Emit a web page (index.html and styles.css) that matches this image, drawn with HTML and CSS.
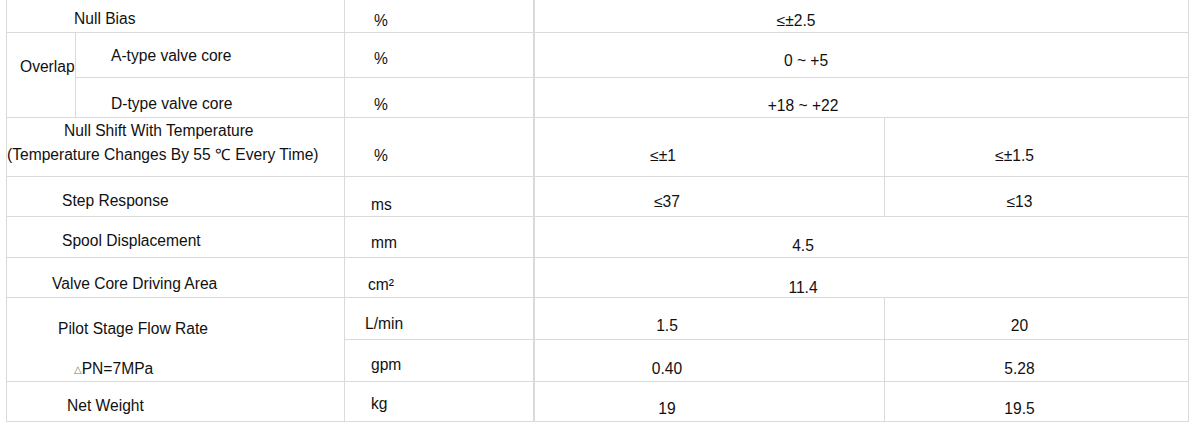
FILE: index.html
```html
<!DOCTYPE html>
<html lang="en">
<head>
<meta charset="utf-8">
<title>Valve specifications</title>
<link rel="stylesheet" href="styles.css">
</head>
<body>
<div class="spec">
  <!-- Row 1 -->
  <div class="cell lab pt10 pl67">Null Bias</div>
  <div class="cell unit pt12 pl29">%</div>
  <div class="cell val span-de pt12 pr131">≤±2.5</div>

  <!-- Row 2 -->
  <div class="cell sub-a rows2 pt25 pl13">Overlap</div>
  <div class="cell sub-b pt14 pl35">A-type valve core</div>
  <div class="cell unit pt17 pl29">%</div>
  <div class="cell val span-de pt19 pr111">0 ~ +5</div>

  <!-- Row 3 -->
  <div class="cell sub-b pt17 pl35">D-type valve core</div>
  <div class="cell unit pt18 pl29">%</div>
  <div class="cell val span-de pt19 pr117">+18 ~ +22</div>

  <!-- Row 4 -->
  <div class="cell lab pt4">
    <div class="pl57">Null Shift With Temperature</div>
    <div class="line2">(Temperature Changes By 55 ℃ Every Time)</div>
  </div>
  <div class="cell unit pt29 pl29">%</div>
  <div class="cell val col-d pt29 pr93">≤±1</div>
  <div class="cell val col-e pt29 pr44">≤±1.5</div>

  <!-- Row 5 -->
  <div class="cell lab pt15 pl55">Step Response</div>
  <div class="cell unit pt19 pl26">ms</div>
  <div class="cell val col-d pt16">≤37</div>
  <div class="cell val col-e pt16">≤13</div>

  <!-- Row 6 -->
  <div class="cell lab pt15 pl55">Spool Displacement</div>
  <div class="cell unit pt17 pl26">mm</div>
  <div class="cell val span-de pt20 pr117">4.5</div>

  <!-- Row 7 -->
  <div class="cell lab pt17 pl45">Valve Core Driving Area</div>
  <div class="cell unit pt18 pl23">cm²</div>
  <div class="cell val span-de pt21 pr117">11.4</div>

  <!-- Rows 8-9 -->
  <div class="cell lab rows2 pt22">
    <div class="pl51">Pilot Stage Flow Rate</div>
    <div class="pl67 gap22"><span class="delta">△</span>PN=7MPa</div>
  </div>
  <div class="cell unit pt17 pl20">L/min</div>
  <div class="cell val col-d pt19">1.5</div>
  <div class="cell val col-e pt19">20</div>

  <div class="cell unit pt16 pl26">gpm</div>
  <div class="cell val col-d pt20">0.40</div>
  <div class="cell val col-e pt20">5.28</div>

  <!-- Row 10 -->
  <div class="cell lab pt15 pl60">Net Weight</div>
  <div class="cell unit pt13 pl26">kg</div>
  <div class="cell val col-d pt18">19</div>
  <div class="cell val col-e pt18">19.5</div>
</div>
</body>
</html>
```

FILE: styles.css
```css
html, body {
  margin: 0;
  padding: 0;
  background: #ffffff;
}

body {
  font-family: "Liberation Sans", Arial, sans-serif;
  font-size: 15.6px;
  line-height: 18px;
  color: #111111;
}

.spec {
  display: grid;
  grid-template-columns: 69px 269px 190px 350px 304px;
  grid-template-rows: 33px 45px 40px 59px 40px 41px 40px 42px 42px 40px;
  margin-left: 6px;
  border-left: 1px solid #dadada;
  box-sizing: border-box;
  width: max-content;
}

.cell {
  box-sizing: border-box;
  border-right: 1px solid #dadada;
  border-bottom: 1px solid #dadada;
  white-space: nowrap;
}

.lab { grid-column: span 2; text-align: left; }
.sub-a { grid-column: 1; }
.sub-b { grid-column: 2; }
.rows2 { grid-row: span 2; }

.unit {
  grid-column: 3;
  border-right-width: 2px;
}

.val { text-align: center; }
.span-de { grid-column: 4 / span 2; }
.col-d { grid-column: 4; padding-right: 85px; }
.col-e { grid-column: 5; padding-right: 34px; }

.line2 { margin-top: 6px; }
.gap22 { margin-top: 22px; }

.delta {
  font-family: "DejaVu Sans", sans-serif;
  font-size: 10px;
  color: #777777;
  vertical-align: 1px;
  margin-right: 0;
}

/* vertical offsets */
.pt4 { padding-top: 4px; }
.pt10 { padding-top: 10px; }
.pt12 { padding-top: 12px; }
.pt13 { padding-top: 13px; }
.pt14 { padding-top: 14px; }
.pt15 { padding-top: 15px; }
.pt16 { padding-top: 16px; }
.pt17 { padding-top: 17px; }
.pt18 { padding-top: 18px; }
.pt19 { padding-top: 19px; }
.pt20 { padding-top: 20px; }
.pt21 { padding-top: 21px; }
.pt22 { padding-top: 22px; }
.pt25 { padding-top: 25px; }
.pt29 { padding-top: 29px; }

/* horizontal offsets */
.pl13 { padding-left: 13px; }
.pl20 { padding-left: 20px; }
.pl23 { padding-left: 23px; }
.pl26 { padding-left: 26px; }
.pl29 { padding-left: 29px; }
.pl35 { padding-left: 35px; }
.pl45 { padding-left: 45px; }
.pl51 { padding-left: 51px; }
.pl55 { padding-left: 55px; }
.pl57 { padding-left: 57px; }
.pl60 { padding-left: 60px; }
.pl67 { padding-left: 67px; }

.pr111 { padding-right: 111px; }
.pr117 { padding-right: 117px; }
.pr131 { padding-right: 131px; }
.col-d.pr93 { padding-right: 93px; }
.col-e.pr44 { padding-right: 44px; }
```
